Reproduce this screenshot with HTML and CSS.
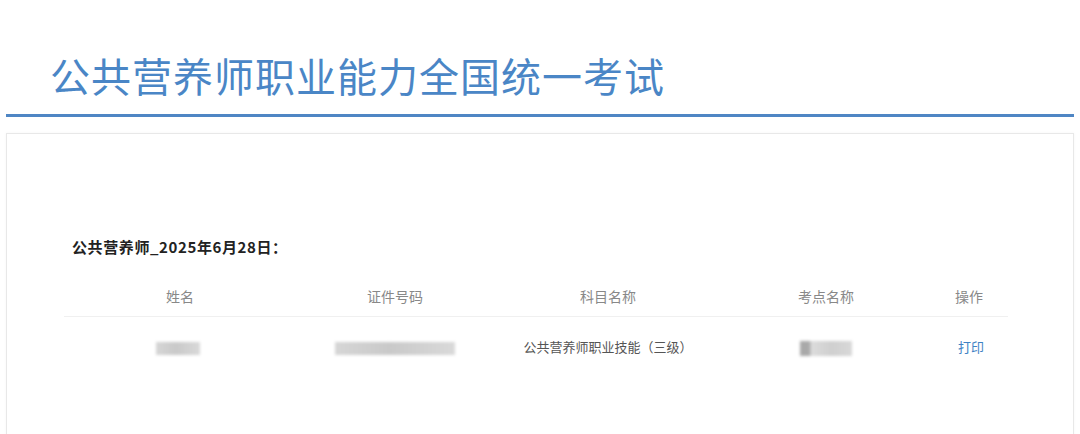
FILE: index.html
```html
<!DOCTYPE html>
<html lang="zh-CN">
<head>
    <meta charset="UTF-8">
    <meta name="viewport" content="width=device-width, initial-scale=1.0">
    <title>公共营养师职业能力全国统一考试</title>
    <link rel="stylesheet" href="styles.css">
</head>
<body>
    <div class="page">
        <h1 class="exam-title">公共营养师职业能力全国统一考试</h1>

        <div class="card">
            <h2 class="session">公共营养师_2025年6月28日：</h2>
            <table class="result-table">
                <colgroup>
                    <col class="c-name">
                    <col class="c-id">
                    <col class="c-subject">
                    <col class="c-site">
                    <col class="c-op">
                </colgroup>
                <thead>
                    <tr>
                        <th>姓名</th>
                        <th>证件号码</th>
                        <th>科目名称</th>
                        <th>考点名称</th>
                        <th>操作</th>
                    </tr>
                </thead>
                <tbody>
                    <tr>
                        <td><span class="masked masked-name"></span></td>
                        <td><span class="masked masked-id"></span></td>
                        <td>公共营养师职业技能（三级）</td>
                        <td><span class="masked masked-site"></span></td>
                        <td><a href="#" class="print-link">打印</a></td>
                    </tr>
                </tbody>
            </table>
        </div>
    </div>
</body>
</html>
```

FILE: styles.css
```css
body {
    margin: 0;
    padding: 0;
    background-color: #fff;
    font-family: "Noto Sans CJK SC", "Noto Sans", sans-serif;
    color: #555;
}

.page {
    padding: 0 6px;
}

.exam-title {
    margin: 0;
    padding: 46px 0 10px 44px;
    line-height: 58px;
    font-size: 40px;
    font-weight: normal;
    letter-spacing: 1px;
    color: #4a86c6;
    border-bottom: 3px solid #4f86c4;
}

.card {
    margin-top: 16px;
    min-height: 290px;
    padding: 103px 65px 0 57px;
    border: 1px solid #e8e8e8;
    box-shadow: 0 0 3px rgba(0, 0, 0, 0.04);
}

.session {
    margin: 0 0 19px 0;
    padding-left: 8px;
    font-size: 15px;
    line-height: 20px;
    font-weight: bold;
    letter-spacing: 0.6px;
    color: #222;
}

.result-table {
    width: 944px;
    border-collapse: collapse;
    table-layout: fixed;
}

.c-name { width: 232px; }
.c-id { width: 198px; }
.c-subject { width: 228px; }
.c-site { width: 208px; }
.c-op { width: 78px; }

.result-table th {
    padding: 10px 0;
    line-height: 20px;
    font-size: 14px;
    font-weight: normal;
    color: #888;
    text-align: center;
    border-bottom: 1px solid #f0f0f0;
}

.result-table td {
    padding: 20px 0;
    line-height: 20px;
    font-size: 13px;
    color: #555;
    text-align: center;
}

.masked {
    display: inline-block;
    vertical-align: middle;
    height: 13px;
    background: linear-gradient(90deg, #d6d6d6, #c9c9c9 45%, #d9d9d9);
    filter: blur(1.5px);
}

.masked-name {
    width: 44px;
    margin-left: -4px;
}

.masked-id {
    width: 120px;
}

.masked-site {
    width: 52px;
    height: 15px;
    background: linear-gradient(90deg, #a9a9a9 0, #a9a9a9 18%, #dcdcdc 22%, #cfcfcf 60%, #d8d8d8);
}

.print-link {
    margin-left: 4px;
    color: #3e82c4;
    text-decoration: none;
}
```
